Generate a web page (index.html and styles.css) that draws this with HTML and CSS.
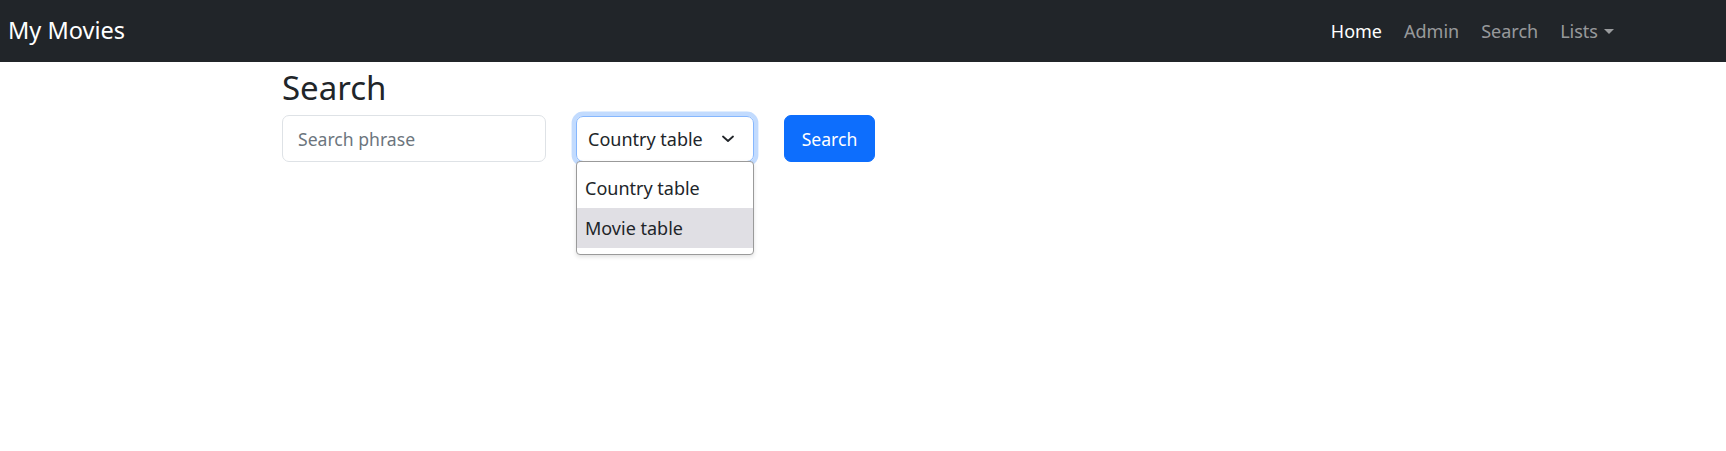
FILE: index.html
```html
<!DOCTYPE html>
<html lang="en">
<head>
<meta charset="utf-8">
<title>My Movies</title>
<link rel="stylesheet" href="styles.css">
</head>
<body>
<nav class="navbar">
  <a class="brand" href="#">My Movies</a>
  <ul class="nav">
    <li><a class="nav-link active" href="#">Home</a></li>
    <li><a class="nav-link" href="#">Admin</a></li>
    <li><a class="nav-link" href="#">Search</a></li>
    <li><a class="nav-link dropdown-toggle" href="#">Lists</a></li>
  </ul>
</nav>
<main class="content">
  <h2 class="title">Search</h2>
  <form class="search-form">
    <input class="field" type="text" placeholder="Search phrase">
    <div class="select-wrap">
      <div class="select">
        <span>Country table</span>
        <svg class="chevron" width="12" height="8" viewBox="0 0 12 8"><path d="M1 1.5 L6 6 L11 1.5" fill="none" stroke="#212529" stroke-width="1.8" stroke-linecap="round" stroke-linejoin="round"/></svg>
      </div>
      <div class="choice-list">
        <div class="choice">Country table</div>
        <div class="choice choice-hover">Movie table</div>
      </div>
    </div>
    <button class="btn" type="button">Search</button>
  </form>
</main>
</body>
</html>
```
FILE: styles.css
```css
* { box-sizing: border-box; }
html, body { margin: 0; padding: 0; }
html { min-height: 100%; }
body {
  min-height: 100vh;
  font-family: "Noto Sans", "Open Sans", sans-serif;
  font-size: 17.6px;
  color: #212529;
  background: #fff;
}
.navbar {
  height: 62px;
  background: #212529;
  display: flex;
  align-items: center;
  justify-content: space-between;
  padding: 0 101px 0 8px;
}
.brand {
  color: #fff;
  text-decoration: none;
  font-size: 23.5px;
  line-height: 1;
}
.nav {
  list-style: none;
  margin: 0;
  padding: 0;
  display: flex;
}
.nav-link {
  display: block;
  padding: 0 11px;
  color: rgba(255,255,255,.55);
  text-decoration: none;
  line-height: 1.5;
  font-size: 18px;
}
.nav-link.active { color: #fff; }
.dropdown-toggle::after {
  content: "";
  display: inline-block;
  margin-left: 6px;
  vertical-align: 4px;
  border-top: 5.5px solid;
  border-right: 5.5px solid transparent;
  border-left: 5.5px solid transparent;
  border-bottom: 0;
}
.content {
  padding-left: 282px;
  min-height: 300px;
}
.title {
  margin: 0;
  padding-top: 5px;
  font-size: 33px;
  font-weight: 400;
  line-height: 42px;
}
.search-form {
  display: flex;
  gap: 30px;
  margin-top: 6px;
  align-items: flex-start;
}
.field {
  width: 264px;
  height: 47px;
  border: 1px solid #dee2e6;
  border-radius: 7px;
  padding: 0 15px;
  font: inherit;
  color: #212529;
}
.field::placeholder { color: #6c757d; }
.select-wrap {
  position: relative;
  margin-top: 1px;
}
.select {
  width: 178px;
  height: 46px;
  border: 1px solid #86b7fe;
  border-radius: 7px;
  box-shadow: 0 0 0 4.4px rgba(13,110,253,.25);
  display: flex;
  align-items: center;
  justify-content: space-between;
  padding: 0 19px 0 11px;
  font-size: 18px;
}
.chevron { display: block; }
.choice-list {
  position: absolute;
  z-index: 10;
  top: 45px;
  left: 0;
  width: 178px;
  padding: 6px 0;
  background: #fff;
  border: 1px solid #9a9a9a;
  border-radius: 4px;
  box-shadow: 0 2px 4px rgba(0,0,0,.12);
  font-size: 18px;
}
.choice {
  height: 40px;
  line-height: 40px;
  padding-left: 8px;
}
.choice-hover { background: #e0dfe4; }
.btn {
  height: 47px;
  width: 91px;
  border: 1px solid #0d6efd;
  background: #0d6efd;
  color: #fff;
  border-radius: 7px;
  font: inherit;
  padding: 0;
}
```
